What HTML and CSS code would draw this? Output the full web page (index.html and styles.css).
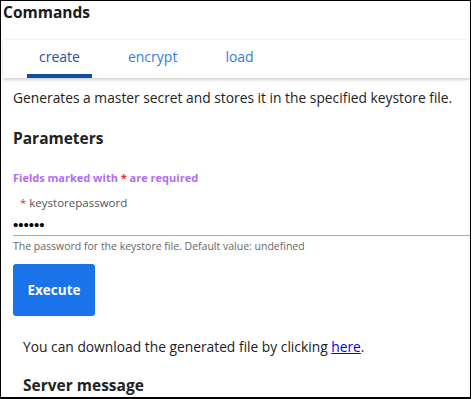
FILE: index.html
```html
<!DOCTYPE html>
<html lang="en">
<head>
  <meta charset="UTF-8" />
  <title>Commands</title>
  <link rel="stylesheet" href="styles.css">
</head>
<body>

<div class="frame">
  <h1>Commands</h1>

  <div class="tabs">
    <span class="tab active">create</span>
    <span class="tab">encrypt</span>
    <span class="tab">load</span>
  </div>

  <div class="panel">
    <p class="desc">Generates a master secret and stores it in the specified keystore file.</p>

    <h2>Parameters</h2>
    <p class="required-note">Fields marked with <span class="star">*</span> are required</p>

    <div class="field">
      <label for="keystorepassword"><span class="star">*</span> keystorepassword</label>
      <input type="password" id="keystorepassword" value="secret">
      <div class="hint">The password for the keystore file. Default value: undefined</div>
    </div>

    <button class="execute">Execute</button>

    <div class="result">
      <p>You can download the generated file by clicking <a href="#">here</a>.</p>
      <h2>Server message</h2>
    </div>
  </div>
</div>

</body>
</html>
```

FILE: styles.css
```css
html, body {
  margin: 0;
  padding: 0;
  font-family: "Open Sans", sans-serif;
  color: #222;
}

.frame {
  box-sizing: border-box;
  height: 399px;
  border: 1px solid #000;
  border-bottom-width: 2px;
  padding: 0 0 0 2px;
  overflow: hidden;
}

h1 {
  margin: 0;
  padding-top: 1px;
  font-size: 15.5px;
  font-weight: 700;
  line-height: 20px;
  color: #1a1a1a;
}

.tabs {
  display: flex;
  gap: 24px;
  margin-top: 17px;
  background: #fff;
  border-top: 1px solid #f4f4f4;
  box-shadow: 0 2px 3px rgba(0, 0, 0, 0.18);
  padding-left: 24px;
}

.tab {
  padding: 0 12px;
  font-size: 14px;
  line-height: 34px;
  color: #2f7de1;
  border-bottom: 4px solid transparent;
}

.tab.active {
  color: #21559c;
  border-bottom-color: #0d4fa0;
}

.panel {
  padding: 0 0 0 10px;
}

.desc {
  margin: 10px 0 0;
  font-size: 13.8px;
  line-height: 20px;
}

h2 {
  margin: 19px 0 0;
  font-size: 15.5px;
  line-height: 22px;
  font-weight: 700;
}

.required-note {
  margin: 21px 0 0;
  font-size: 11px;
  font-weight: 700;
  color: #b06cf4;
  line-height: 16px;
}

.star {
  color: #e0313f;
}

.field label {
  display: block;
  margin-top: 9px;
  padding-left: 7px;
  font-size: 11.5px;
  color: #555;
  line-height: 16px;
}

.field input {
  display: block;
  box-sizing: border-box;
  width: 100%;
  margin: 3px 0 0;
  padding: 2px 0 2px;
  border: none;
  border-bottom: 1px solid #aaa;
  font-size: 15px;
  height: 22px;
  outline: none;
  background: transparent;
}

.hint {
  margin-top: 3px;
  font-size: 10.5px;
  color: #666;
  line-height: 14px;
}

.execute {
  display: block;
  margin-top: 11px;
  width: 82px;
  height: 52px;
  border: none;
  border-radius: 3px;
  background: #1a73e8;
  color: #fff;
  font-family: inherit;
  font-size: 13.5px;
  font-weight: 700;
}

.result {
  padding-left: 10px;
}

.result p {
  margin: 21px 0 0;
  font-size: 13.8px;
  line-height: 20px;
}

.result a {
  color: #0000ee;
}

.result h2 {
  margin-top: 17px;
}
```
